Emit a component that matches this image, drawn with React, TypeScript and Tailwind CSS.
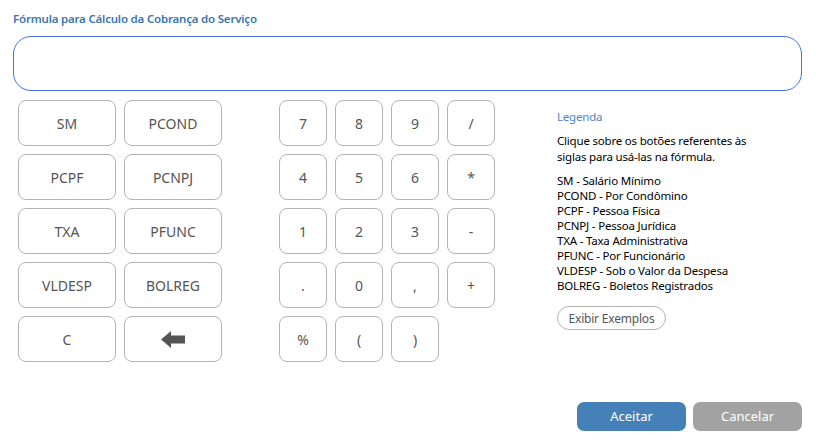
const siglas = ["SM", "PCOND", "PCPF", "PCNPJ", "TXA", "PFUNC", "VLDESP", "BOLREG", "C"]
const teclas = ["7", "8", "9", "/", "4", "5", "6", "*", "1", "2", "3", "-", ".", "0", ",", "+", "%", "(", ")"]

const legenda = [
  "SM - Salário Mínimo",
  "PCOND - Por Condômino",
  "PCPF - Pessoa Física",
  "PCNPJ - Pessoa Jurídica",
  "TXA - Taxa Administrativa",
  "PFUNC - Por Funcionário",
  "VLDESP - Sob o Valor da Despesa",
  "BOLREG - Boletos Registrados",
]

const btn =
  "h-[46px] rounded-[8px] border border-[#b4b4b4] bg-white text-[14px] text-[#555] flex items-center justify-center"

export default function App() {
  return (
    <div
      className="w-[816px] h-[440px] bg-white relative"
      style={{ fontFamily: '"Noto Sans", "Open Sans", sans-serif' }}
    >
      <div className="px-[13px] pt-[10px]">
        <h1 className="text-[11.5px] tracking-[-0.2px] font-semibold text-[#3a76b0] leading-[18px]">
          Fórmula para Cálculo da Cobrança do Serviço
        </h1>
        <div className="mt-[8px] w-[789px] h-[55px] rounded-[18px] border border-[#4a6fdc]" />
      </div>

      <div className="flex pl-[18px] pt-[9px]">
        {/* siglas */}
        <div className="grid grid-cols-[98px_98px] gap-[8px] w-[204px]">
          {siglas.map((s) => (
            <button key={s} className={btn}>
              {s}
            </button>
          ))}
          <button className={btn}>
            <svg width="25" height="17" viewBox="0 0 25 17">
              <path d="M0 8.5 L10 0 L10 4.5 L24 4.5 L24 12.5 L10 12.5 L10 17 Z" fill="#555" />
            </svg>
          </button>
        </div>

        {/* teclado numerico */}
        <div className="ml-[57px] grid grid-cols-[48px_48px_48px_48px] gap-[8px] h-fit">
          {teclas.map((t) => (
            <button key={t} className={btn}>
              {t}
            </button>
          ))}
        </div>

        {/* legenda */}
        <div className="ml-[62px] pt-[9px] text-[11.5px] tracking-[-0.2px] leading-[15px] text-black w-[230px]">
          <div className="text-[#4a86c8]">Legenda</div>
          <p className="mt-[9px] leading-[16px]">
            Clique sobre os botões referentes às
            <br />
            siglas para usá-las na fórmula.
          </p>
          <ul className="mt-[8px]">
            {legenda.map((l) => (
              <li key={l}>{l}</li>
            ))}
          </ul>
          <button className="mt-[13px] h-[24px] w-[109px] rounded-full border border-[#b4b4b4] text-[12px] text-[#555]">
            Exibir Exemplos
          </button>
        </div>
      </div>

      <div className="absolute right-[14px] bottom-[9px] flex gap-[7px]">
        <button className="w-[109px] h-[29px] rounded-[7px] bg-[#4581b8] text-white text-[13px]">
          Aceitar
        </button>
        <button className="w-[109px] h-[29px] rounded-[7px] bg-[#a2a2a2] text-white text-[13px]">
          Cancelar
        </button>
      </div>
    </div>
  )
}
